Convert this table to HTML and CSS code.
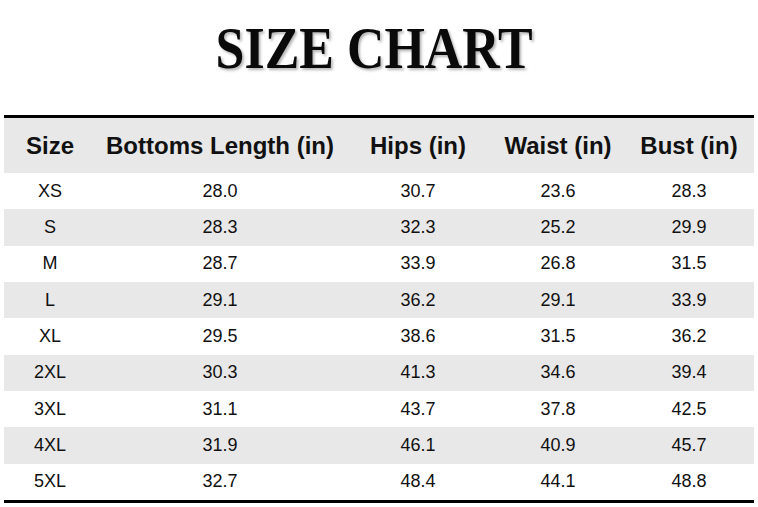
FILE: index.html
```html
<!DOCTYPE html>
<html>
<head>
<meta charset="utf-8">
<link rel="stylesheet" href="styles.css">
</head>
<body>
<div class="page">
  <header class="title-wrap"><h1 class="title">SIZE CHART</h1></header>
  <table class="chart">
    <thead>
      <tr><th>Size</th><th>Bottoms Length (in)</th><th>Hips (in)</th><th>Waist (in)</th><th>Bust (in)</th></tr>
    </thead>
    <tbody>
      <tr><td>XS</td><td>28.0</td><td>30.7</td><td>23.6</td><td>28.3</td></tr>
      <tr><td>S</td><td>28.3</td><td>32.3</td><td>25.2</td><td>29.9</td></tr>
      <tr><td>M</td><td>28.7</td><td>33.9</td><td>26.8</td><td>31.5</td></tr>
      <tr><td>L</td><td>29.1</td><td>36.2</td><td>29.1</td><td>33.9</td></tr>
      <tr><td>XL</td><td>29.5</td><td>38.6</td><td>31.5</td><td>36.2</td></tr>
      <tr><td>2XL</td><td>30.3</td><td>41.3</td><td>34.6</td><td>39.4</td></tr>
      <tr><td>3XL</td><td>31.1</td><td>43.7</td><td>37.8</td><td>42.5</td></tr>
      <tr><td>4XL</td><td>31.9</td><td>46.1</td><td>40.9</td><td>45.7</td></tr>
      <tr><td>5XL</td><td>32.7</td><td>48.4</td><td>44.1</td><td>48.8</td></tr>
    </tbody>
  </table>
</div>
</body>
</html>
```

FILE: styles.css
```css
html, body {
  margin: 0;
  padding: 0;
  background: #ffffff;
}
.page {
  width: 758px;
  height: 507px;
  overflow: hidden;
}
.title-wrap {
  height: 115px;
  display: flex;
  justify-content: center;
  align-items: flex-start;
  padding-right: 10px;
  box-sizing: border-box;
}
.title {
  margin: 0;
  padding-top: 12px;
  font-family: "Liberation Serif", "Times New Roman", serif;
  font-weight: bold;
  font-size: 59px;
  line-height: 72px;
  color: #0a0a0a;
  display: inline-block;
  transform: scaleX(0.88);
  text-shadow: 2px 2px 3px rgba(0,0,0,0.3);
}
.chart {
  margin-left: 4px;
  width: 750px;
  border-collapse: collapse;
  table-layout: fixed;
  font-family: "Liberation Sans", Arial, sans-serif;
  color: #111;
  border-top: 3px solid #000;
  border-bottom: 3px solid #000;
}
.chart th:nth-child(1) { width: 92px; }
.chart th:nth-child(2) { width: 248px; }
.chart th:nth-child(3) { width: 148px; }
.chart th:nth-child(4) { width: 132px; }
.chart th:nth-child(5) { width: 130px; }
.chart th {
  height: 55px;
  padding: 0;
  font-size: 24px;
  font-weight: bold;
  text-align: center;
  background: #e8e8e8;
  white-space: nowrap;
}
.chart td {
  height: 36.33px;
  padding: 0;
  font-size: 18px;
  text-align: center;
}
.chart tbody tr:nth-child(even) td {
  background: #e8e8e8;
}
```
